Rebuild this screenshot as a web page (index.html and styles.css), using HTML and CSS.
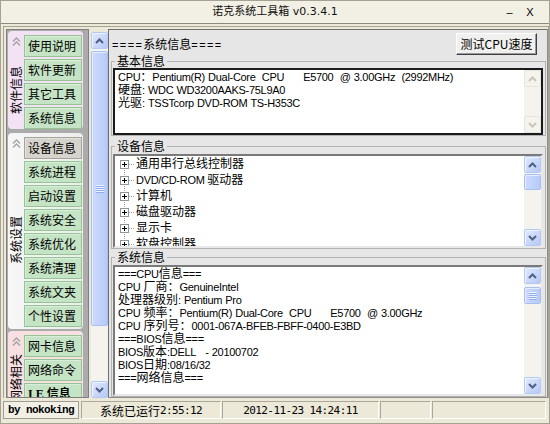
FILE: index.html
```html
<!DOCTYPE html>
<html lang="zh-CN">
<head>
<meta charset="utf-8">
<title>诺克系统工具箱</title>
<link rel="stylesheet" href="styles.css">
</head>
<body>
<div class="window">
  <div class="titlebar">
    <span class="tb-spacer"></span>
    <span class="title">诺克系统工具箱 v0.3.4.1</span>
    <span class="tb-btns"><span class="tb-min">–</span><span class="tb-x">X</span></span>
  </div>
  <div class="main">
    <div class="nav">
      <div class="grp g1">
        <div class="side">
          <svg class="chev" width="9" height="9" viewBox="0 0 9 9"><polyline points="1,4.5 4.5,1 8,4.5" fill="none" stroke="#a3a3a3" stroke-width="1.4"/><polyline points="1,8.5 4.5,5 8,8.5" fill="none" stroke="#a3a3a3" stroke-width="1.4"/></svg>
          <div class="vwrap"><span class="vlabel">软件信息</span></div>
        </div>
        <div class="btns">
          <div class="nbtn">使用说明</div>
          <div class="nbtn">软件更新</div>
          <div class="nbtn">其它工具</div>
          <div class="nbtn">系统信息</div>
        </div>
      </div>
      <div class="grp g2">
        <div class="side">
          <svg class="chev" width="9" height="9" viewBox="0 0 9 9"><polyline points="1,4.5 4.5,1 8,4.5" fill="none" stroke="#a3a3a3" stroke-width="1.4"/><polyline points="1,8.5 4.5,5 8,8.5" fill="none" stroke="#a3a3a3" stroke-width="1.4"/></svg>
          <div class="vwrap"><span class="vlabel">系统设置</span></div>
        </div>
        <div class="btns">
          <div class="nbtn sel">设备信息</div>
          <div class="nbtn">系统进程</div>
          <div class="nbtn">启动设置</div>
          <div class="nbtn">系统安全</div>
          <div class="nbtn">系统优化</div>
          <div class="nbtn">系统清理</div>
          <div class="nbtn">系统文夹</div>
          <div class="nbtn">个性设置</div>
        </div>
      </div>
      <div class="grp g3">
        <div class="side">
          <svg class="chev" width="9" height="9" viewBox="0 0 9 9"><polyline points="1,4.5 4.5,1 8,4.5" fill="none" stroke="#a3a3a3" stroke-width="1.4"/><polyline points="1,8.5 4.5,5 8,8.5" fill="none" stroke="#a3a3a3" stroke-width="1.4"/></svg>
          <div class="vwrap"><span class="vlabel">网络相关</span></div>
        </div>
        <div class="btns">
          <div class="nbtn">网卡信息</div>
          <div class="nbtn">网络命令</div>
          <div class="nbtn ie">I E 信息</div>
        </div>
      </div>
    </div>

    <div class="sb sb-main">
      <div class="sb-btn"><svg width="9" height="6" viewBox="0 0 9 6"><polyline points="1,5 4.5,1.5 8,5" fill="none" stroke="#4d6185" stroke-width="2"/></svg></div>
      <div class="sb-track"><div class="sb-thumb th-main"><span class="grip"></span></div></div>
      <div class="sb-btn"><svg width="9" height="6" viewBox="0 0 9 6"><polyline points="1,1 4.5,4.5 8,1" fill="none" stroke="#4d6185" stroke-width="2"/></svg></div>
    </div>

    <div class="pane">
      <div class="pane-head">
        <span class="head-text"><span class="eq">====</span>系统信息<span class="eq">====</span></span>
        <button class="btn">测试CPU速度</button>
      </div>

      <fieldset class="fs fs1">
        <legend>基本信息</legend>
        <div class="box box1">
          <div class="txt">CPU<span class="z">：</span>Pentium(R) Dual-Core  CPU      E5700  @ 3.00GHz  (2992MHz)
<span class="z">硬盘</span>: WDC WD3200AAKS-75L9A0
<span class="z">光驱</span>: TSSTcorp DVD-ROM TS-H353C</div>
          <div class="sb dis">
            <div class="sb-btn"><svg width="9" height="6" viewBox="0 0 9 6"><polyline points="1,5 4.5,1.5 8,5" fill="none" stroke="#c9c7ba" stroke-width="2"/></svg></div>
            <div class="sb-track"></div>
            <div class="sb-btn"><svg width="9" height="6" viewBox="0 0 9 6"><polyline points="1,1 4.5,4.5 8,1" fill="none" stroke="#c9c7ba" stroke-width="2"/></svg></div>
          </div>
        </div>
      </fieldset>

      <fieldset class="fs fs2">
        <legend>设备信息</legend>
        <div class="box box2">
          <div class="tree">
            <div class="ti"><svg class="pb" width="9" height="9" viewBox="0 0 9 9"><rect x="0.5" y="0.5" width="8" height="8" fill="#fff" stroke="#8c969e"/><path d="M2 4.5H7M4.5 2V7" stroke="#000"/></svg><span class="conn"></span><span class="tl"><span class="z">通用串行总线控制器</span></span></div>
            <div class="ti"><svg class="pb" width="9" height="9" viewBox="0 0 9 9"><rect x="0.5" y="0.5" width="8" height="8" fill="#fff" stroke="#8c969e"/><path d="M2 4.5H7M4.5 2V7" stroke="#000"/></svg><span class="conn"></span><span class="tl">DVD/CD-ROM <span class="z">驱动器</span></span></div>
            <div class="ti"><svg class="pb" width="9" height="9" viewBox="0 0 9 9"><rect x="0.5" y="0.5" width="8" height="8" fill="#fff" stroke="#8c969e"/><path d="M2 4.5H7M4.5 2V7" stroke="#000"/></svg><span class="conn"></span><span class="tl"><span class="z">计算机</span></span></div>
            <div class="ti"><svg class="pb" width="9" height="9" viewBox="0 0 9 9"><rect x="0.5" y="0.5" width="8" height="8" fill="#fff" stroke="#8c969e"/><path d="M2 4.5H7M4.5 2V7" stroke="#000"/></svg><span class="conn"></span><span class="tl"><span class="z">磁盘驱动器</span></span></div>
            <div class="ti"><svg class="pb" width="9" height="9" viewBox="0 0 9 9"><rect x="0.5" y="0.5" width="8" height="8" fill="#fff" stroke="#8c969e"/><path d="M2 4.5H7M4.5 2V7" stroke="#000"/></svg><span class="conn"></span><span class="tl"><span class="z">显示卡</span></span></div>
            <div class="ti"><svg class="pb" width="9" height="9" viewBox="0 0 9 9"><rect x="0.5" y="0.5" width="8" height="8" fill="#fff" stroke="#8c969e"/><path d="M2 4.5H7M4.5 2V7" stroke="#000"/></svg><span class="conn"></span><span class="tl"><span class="z">软盘控制器</span></span></div>
          </div>
          <div class="sb">
            <div class="sb-btn"><svg width="9" height="6" viewBox="0 0 9 6"><polyline points="1,5 4.5,1.5 8,5" fill="none" stroke="#4d6185" stroke-width="2"/></svg></div>
            <div class="sb-track"><div class="sb-thumb th-dev"></div></div>
            <div class="sb-btn"><svg width="9" height="6" viewBox="0 0 9 6"><polyline points="1,1 4.5,4.5 8,1" fill="none" stroke="#4d6185" stroke-width="2"/></svg></div>
          </div>
        </div>
      </fieldset>

      <fieldset class="fs fs3">
        <legend>系统信息</legend>
        <div class="box box3">
          <div class="txt">===CPU<span class="z">信息</span>===
CPU <span class="z">厂商：</span>GenuineIntel
<span class="z">处理器级别</span>: Pentium Pro
CPU <span class="z">频率：</span>Pentium(R) Dual-Core  CPU      E5700  @ 3.00GHz
CPU <span class="z">序列号：</span>0001-067A-BFEB-FBFF-0400-E3BD
===BIOS<span class="z">信息</span>===
BIOS<span class="z">版本</span>:DELL   - 20100702
BIOS<span class="z">日期</span>:08/16/32
===<span class="z">网络信息</span>===</div>
          <div class="sb">
            <div class="sb-btn"><svg width="9" height="6" viewBox="0 0 9 6"><polyline points="1,5 4.5,1.5 8,5" fill="none" stroke="#4d6185" stroke-width="2"/></svg></div>
            <div class="sb-track"><div class="sb-thumb th-sys"><span class="grip"></span></div></div>
            <div class="sb-btn"><svg width="9" height="6" viewBox="0 0 9 6"><polyline points="1,1 4.5,4.5 8,1" fill="none" stroke="#4d6185" stroke-width="2"/></svg></div>
          </div>
        </div>
      </fieldset>
    </div>
  </div>

  <div class="status">
    <div class="sp sp1">by nokoking</div>
    <div class="sp sp2"><span class="zh">系统已运行</span>2:55:12</div>
    <div class="sp sp3">2012-11-23 14:24:11</div>
    <div class="sp sp4"></div>
    <div class="sp sp5"></div>
  </div>
</div>
</body>
</html>
```

FILE: styles.css
```css
* { box-sizing: border-box; }
html, body { margin: 0; padding: 0; }
body {
  background: #ece9d8;
  font-family: "Noto Sans CJK SC", sans-serif;
  font-size: 12px;
  color: #000;
}

.window {
  width: 550px;
  height: 424px;
  border: 1px solid #a5a293;
  background: #ece9d8;
  display: flex;
  flex-direction: column;
  overflow: hidden;
}

/* title bar */
.titlebar {
  height: 23px;
  flex: none;
  border-bottom: 1px solid #8c8a7e;
  background: #f2f0e4;
  display: grid;
  grid-template-columns: 1fr auto 1fr;
  align-items: center;
  font-family: "DejaVu Sans", "Noto Sans CJK SC", sans-serif;
  font-size: 11px;
}
.title { white-space: nowrap; line-height: 14px; color: #111; }
.tb-btns {
  justify-self: end;
  display: flex;
  gap: 12px;
  padding-right: 15px;
  font-family: "Liberation Sans", sans-serif;
  font-size: 11px;
  line-height: 14px;
}
.tb-min { width: 9px; text-align: center; }
.tb-x { width: 8px; text-align: center; }

/* main frame */
.main {
  margin: 2px 0 0 2px;
  height: 372px;
  flex: none;
  border: 1px solid #a5a293;
  border-bottom: 0;
  padding: 2px 0 0 2px;
  display: flex;
}

/* left navigation */
.nav {
  width: 83px;
  flex: none;
  border: 1px solid #7f7f7f;
  background: #ababab;
  padding: 1px 5px 0 1px;
  overflow: hidden;
}
.grp {
  display: flex;
  padding: 4px 1px 0 0;
  border-radius: 4px;
  margin-bottom: 4px;
}
.g1 { background: #f3e2f3; }
.g2 { background: linear-gradient(to right, #f7f7f7, #ececec); padding-bottom: 2px; margin-bottom: 2px; }
.g3 { background: #f7dfe2; padding-bottom: 1px; }
.side {
  width: 16px;
  flex: none;
  display: flex;
  flex-direction: column;
  align-items: center;
  padding-top: 2px;
}
.chev { display: block; flex: none; }
.vwrap {
  flex: 1;
  display: flex;
  align-items: center;
  justify-content: center;
  padding-top: 6px;
}
.vlabel {
  writing-mode: vertical-rl;
  text-orientation: sideways;
  transform: rotate(180deg);
  font-size: 12px;
  line-height: 12px;
  white-space: nowrap;
}
.btns { width: 58px; flex: none; }
.nbtn {
  height: 22px;
  margin-bottom: 2px;
  border: 1px solid #93c593;
  background: #c5e4c5;
  box-shadow: inset 1px 1px 0 #d9eed9;
  padding-left: 3px;
  line-height: 20px;
  font-size: 12px;
  white-space: nowrap;
}
.nbtn:last-child { margin-bottom: 0; }
.nbtn.sel {
  border-color: #a6a39b;
  background: #d6d3cc;
  box-shadow: inset 1px 1px 0 #e4e2dc;
}
.nbtn.ie {
  font-family: "Liberation Serif", "Noto Sans CJK SC", serif;
  font-weight: bold;
}

/* XP style scrollbars */
.sb {
  width: 17px;
  flex: none;
  display: flex;
  flex-direction: column;
  background: #f4f3ee;
}
.sb-main { margin: 3px 0 0 2px; }
.sb-btn {
  height: 17px;
  flex: none;
  border: 1px solid #b4c8f6;
  border-radius: 2px;
  background: linear-gradient(135deg, #e0e9fe, #b6c9f5);
  box-shadow: inset 1px 1px 0 #f0f4ff;
  display: flex;
  align-items: center;
  justify-content: center;
}
.sb-btn svg { display: block; }
.sb-track { flex: 1; display: flex; flex-direction: column; }
.sb-thumb {
  flex: none;
  border: 1px solid #a9bff3;
  border-radius: 2px;
  background: linear-gradient(to right, #cddafd, #b7caf7);
  box-shadow: inset 1px 1px 0 #e6edfe;
  display: flex;
  align-items: center;
  justify-content: center;
}
.grip {
  width: 8px;
  height: 8px;
  background: repeating-linear-gradient(to bottom, #eef3ff 0 1px, #8cadf4 1px 2px);
}
.th-main { margin-top: 2px; height: 275px; }
.th-dev { margin-top: 1px; height: 16px; }
.th-sys { margin-top: 3px; height: 17px; }
.sb.dis .sb-btn {
  border-color: #e6e4dc;
  background: #f4f3ee;
  box-shadow: none;
}

/* right pane */
.pane {
  width: 440px;
  flex: none;
  border: 1px solid #8d8d8d;
  border-top-color: #6f6f6f;
  border-left-color: #6f6f6f;
  background: #e6e6e6;
}
.pane-head {
  height: 25px;
  padding: 2px 10px 0 3px;
  display: flex;
  align-items: center;
  justify-content: space-between;
}
.head-text { font-size: 12px; line-height: 14px; white-space: nowrap; }
.eq { font-family: "Liberation Sans", sans-serif; font-size: 11px; letter-spacing: 1.4px; line-height: 0; }
.btn {
  width: 81px;
  height: 22px;
  margin: 0;
  padding: 0;
  font-family: "Noto Sans CJK SC", sans-serif;
  font-size: 12px;
  line-height: 18px;
  color: #000;
  background: #f0f0ee;
  border: 1px solid;
  border-color: #ffffff #404040 #404040 #ffffff;
  box-shadow: inset -1px -1px 0 #9a9a9a;
}

.fs {
  margin: 0 1px 0 2px;
  padding: 1px 2px 0 1px;
  border: 1px solid #b2b2b2;
  min-width: 0;
}
.fs legend {
  margin-left: 2px;
  padding: 0 2px;
  font-size: 12px;
  line-height: 12px;
  height: 12px;
}
.fs2 { margin-top: 4px; padding-top: 2px; }
.fs3 { margin-top: 2px; padding-top: 2px; }

.box {
  display: flex;
  background: #fff;
  border: 2px solid;
  border-color: #7a7a7a #e8e8e8 #e8e8e8 #7a7a7a;
  overflow: hidden;
}
.box1 { height: 67px; border-color: #1a1a1a; }
.box2 { height: 94px; }
.box3 { height: 131px; }

.txt {
  flex: 1;
  min-width: 0;
  padding: 1px 0 0 3px;
  font-family: "Liberation Sans", "Noto Sans CJK SC", sans-serif;
  font-size: 11px;
  line-height: 13px;
  letter-spacing: -0.3px;
  word-spacing: 0.4px;
  white-space: pre;
  overflow: hidden;
}
.z {
  font-family: "Noto Sans CJK SC", sans-serif;
  font-size: 12px;
  line-height: 0;
  letter-spacing: 0;
  word-spacing: 0;
}

.tree {
  flex: 1;
  min-width: 0;
  padding-left: 5px;
  overflow: hidden;
  background: repeating-linear-gradient(to bottom, #a0a0a0 0 1px, transparent 1px 2px) no-repeat 9px 4px / 1px 100%;
}
.ti {
  height: 16px;
  display: flex;
  align-items: center;
  white-space: nowrap;
}
.pb { display: block; flex: none; }
.conn {
  width: 5px;
  height: 0;
  border-top: 1px dotted #a0a0a0;
  flex: none;
}
.tl {
  margin-left: 2px;
  font-family: "Liberation Sans", "Noto Sans CJK SC", sans-serif;
  font-size: 11px;
  line-height: 16px;
  letter-spacing: -0.3px;
}

/* status bar */
.status {
  flex: 1;
  display: flex;
  padding: 3px 3px 0 2px;
}
.sp {
  height: 18px;
  border: 1px solid;
  border-color: #aca899 #ffffff #ffffff #aca899;
  display: flex;
  align-items: center;
  justify-content: center;
  white-space: nowrap;
  font-family: "DejaVu Sans Mono", "Noto Sans CJK SC", monospace;
  font-size: 11px;
  letter-spacing: -0.6px;
}
.sp .zh { font-family: "Noto Sans CJK SC", sans-serif; font-size: 12px; letter-spacing: 0; }
.sp1 {
  width: 76px;
  background: #f1efe6;
  border-color: #9f9d91;
  font-family: "Liberation Mono", monospace;
  font-weight: bold;
}
.sp2 { width: 140px; margin-left: 2px; }
.sp3 { width: 157px; margin-left: 1px; }
.sp4 { width: 51px; margin-left: 1px; }
.sp5 { width: 114px; margin-left: 1px; }
```
